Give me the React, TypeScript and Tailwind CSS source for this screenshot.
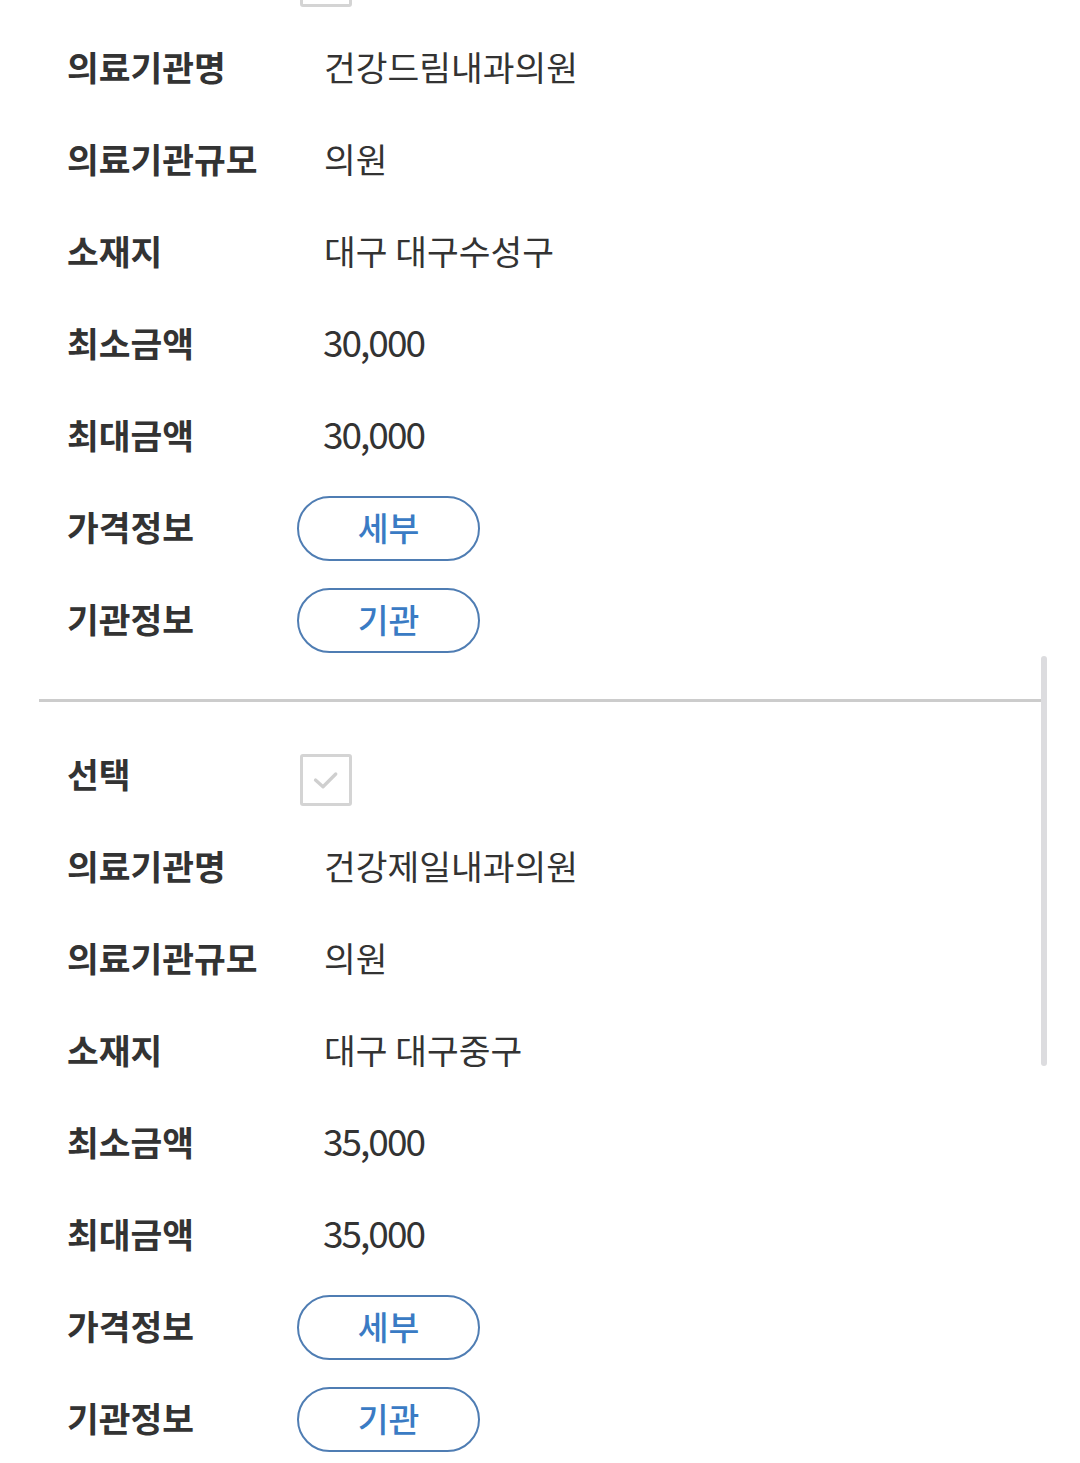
import React from 'react'

interface Clinic {
  name: string
  size: string
  location: string
  minPrice: string
  maxPrice: string
}

const clinics: Clinic[] = [
  { name: '건강드림내과의원', size: '의원', location: '대구 대구수성구', minPrice: '30,000', maxPrice: '30,000' },
  { name: '건강제일내과의원', size: '의원', location: '대구 대구중구', minPrice: '35,000', maxPrice: '35,000' },
]

const font = { fontFamily: '"Noto Sans CJK KR", "Noto Sans", sans-serif' }

function Row({ label, children }: { label: string; children: React.ReactNode }) {
  return (
    <div className="h-[92px] flex items-center">
      <div className="w-[230px] shrink-0 pb-[3px] text-[34.5px] font-bold text-[#333333] leading-none whitespace-nowrap">{label}</div>
      <div className="flex-1 flex items-center">{children}</div>
    </div>
  )
}

function Value({ text }: { text: string }) {
  return <span className="pl-[27px] pb-[4px] text-[34.5px] text-[#333333] leading-none">{text}</span>
}

function NumValue({ text }: { text: string }) {
  return <span className="pl-[26px] pb-[5px] text-[37px] tracking-[-2px] text-[#333333] leading-none">{text}</span>
}

function PillButton({ text }: { text: string }) {
  return (
    <button className="w-[183px] h-[65px] pb-[2px] rounded-full border-2 border-[#4f7db3] bg-white text-[33.5px] font-medium text-[#3a7bc4] leading-none flex items-center justify-center">
      {text}
    </button>
  )
}

function CheckBox() {
  return (
    <div className="ml-[3px] mt-[10px] w-[52px] h-[52px] rounded-[3px] border-[3px] border-[#d4d4d4] bg-white flex items-center justify-center">
      <svg width="36" height="36" viewBox="0 0 24 24" fill="none" stroke="#cfcfcf" strokeWidth="2.2" strokeLinecap="round" strokeLinejoin="round">
        <polyline points="5,12 10,16.5 18.5,8" />
      </svg>
    </div>
  )
}

export default function App() {
  return (
    <div className="relative w-[1080px] h-[1463px] overflow-hidden bg-white" style={font}>
      <div className="-mt-[70px] pl-[39px] pr-[39px]">
        {clinics.map((c, i) => (
          <div key={i}>
            {i > 0 && <div className="h-[3px] bg-[#cccccc] mt-[33px] mb-[27px]" />}
            <div className="px-[28px]">
              <Row label="선택"><CheckBox /></Row>
              <Row label="의료기관명"><Value text={c.name} /></Row>
              <Row label="의료기관규모"><Value text={c.size} /></Row>
              <Row label="소재지"><Value text={c.location} /></Row>
              <Row label="최소금액"><NumValue text={c.minPrice} /></Row>
              <Row label="최대금액"><NumValue text={c.maxPrice} /></Row>
              <Row label="가격정보"><PillButton text="세부" /></Row>
              <Row label="기관정보"><PillButton text="기관" /></Row>
            </div>
          </div>
        ))}
      </div>
      {/* scrollbar */}
      <div className="absolute left-[1041px] top-[656px] w-[6px] h-[410px] rounded-full bg-[#dcdcdf]" />
    </div>
  )
}
